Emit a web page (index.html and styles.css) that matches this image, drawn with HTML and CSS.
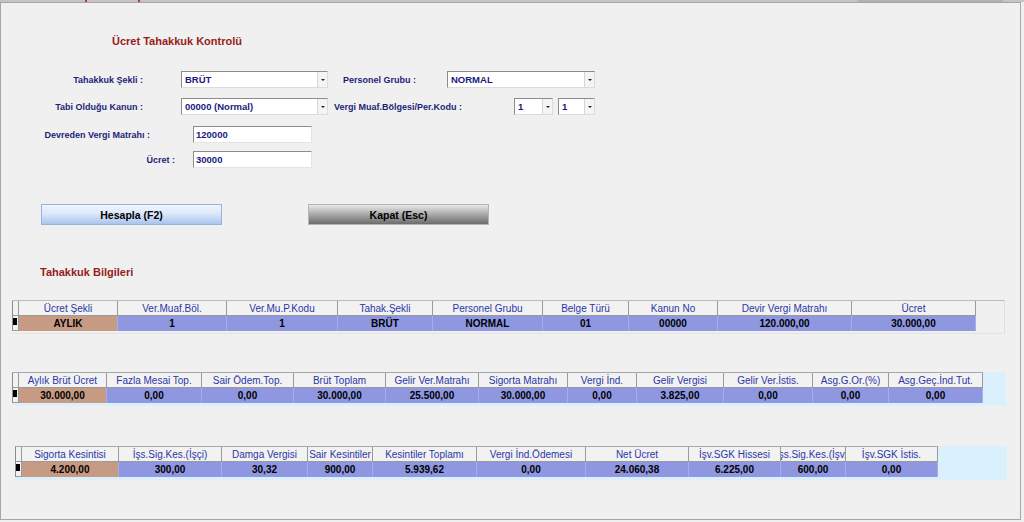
FILE: index.html
```html
<!DOCTYPE html>
<html lang="tr">
<head>
    <meta charset="UTF-8">
    <title>Ücret Tahakkuk Kontrolü</title>
    <link rel="stylesheet" href="styles.css">
</head>
<body>
    <div class="topbar">
        <span class="tick tick-1"></span>
        <span class="tick tick-2"></span>
        <span class="tab"></span>
    </div>
    <main class="panel">
        <h1 class="title">Ücret Tahakkuk Kontrolü</h1>

        <div class="form">
            <div class="row">
                <label class="lbl w142">Tahakkuk Şekli :</label>
                <div class="combo c147 ml38"><span>BRÜT</span><i class="drop"></i></div>
                <label class="lbl2 ml15 w104">Personel Grubu :</label>
                <div class="combo c148"><span>NORMAL</span><i class="drop"></i></div>
            </div>
            <div class="row r2">
                <label class="lbl w142">Tabi Olduğu Kanun :</label>
                <div class="combo c147 ml38"><span>00000 (Normal)</span><i class="drop"></i></div>
                <label class="lbl2 ml6 w180">Vergi Muaf.Bölgesi/Per.Kodu :</label>
                <div class="combo c39"><span>1</span><i class="drop"></i></div>
                <div class="combo c37 ml5"><span>1</span><i class="drop"></i></div>
            </div>
            <div class="row r3">
                <label class="lbl w149">Devreden Vergi Matrahı :</label>
                <input class="field ml43" type="text" value="120000">
            </div>
            <div class="row r4">
                <label class="lbl w174">Ücret :</label>
                <input class="field ml18" type="text" value="30000">
            </div>
        </div>

        <div class="buttons">
            <button class="btn btn-blue">Hesapla (F2)</button>
            <button class="btn btn-gray">Kapat (Esc)</button>
        </div>

        <h2 class="subtitle">Tahakkuk Bilgileri</h2>

        <!-- genel bilgiler -->
        <div class="grid grid-a">
            <div class="cols cols-a">
                <div class="hd"></div>
                <div class="hd">Ücret Şekli</div>
                <div class="hd">Ver.Muaf.Böl.</div>
                <div class="hd">Ver.Mu.P.Kodu</div>
                <div class="hd">Tahak.Şekli</div>
                <div class="hd">Personel Grubu</div>
                <div class="hd">Belge Türü</div>
                <div class="hd">Kanun No</div>
                <div class="hd">Devir Vergi Matrahı</div>
                <div class="hd">Ücret</div>
                <div class="cell ind"><span class="mark"></span></div>
                <div class="cell key">AYLIK</div>
                <div class="cell">1</div>
                <div class="cell">1</div>
                <div class="cell">BRÜT</div>
                <div class="cell">NORMAL</div>
                <div class="cell">01</div>
                <div class="cell">00000</div>
                <div class="cell">120.000,00</div>
                <div class="cell">30.000,00</div>
            </div>
        </div>

        <!-- brüt / vergi -->
        <div class="grid grid-b blue">
            <div class="cols cols-b">
                <div class="hd"></div>
                <div class="hd">Aylık Brüt Ücret</div>
                <div class="hd">Fazla Mesai Top.</div>
                <div class="hd">Sair Ödem.Top.</div>
                <div class="hd">Brüt Toplam</div>
                <div class="hd">Gelir Ver.Matrahı</div>
                <div class="hd">Sigorta Matrahı</div>
                <div class="hd">Vergi İnd.</div>
                <div class="hd">Gelir Vergisi</div>
                <div class="hd">Gelir Ver.İstis.</div>
                <div class="hd">Asg.G.Or.(%)</div>
                <div class="hd">Asg.Geç.İnd.Tut.</div>
                <div class="cell ind"><span class="mark"></span></div>
                <div class="cell key">30.000,00</div>
                <div class="cell">0,00</div>
                <div class="cell">0,00</div>
                <div class="cell">30.000,00</div>
                <div class="cell">25.500,00</div>
                <div class="cell">30.000,00</div>
                <div class="cell">0,00</div>
                <div class="cell">3.825,00</div>
                <div class="cell">0,00</div>
                <div class="cell">0,00</div>
                <div class="cell">0,00</div>
            </div>
        </div>

        <!-- kesintiler -->
        <div class="grid grid-c blue">
            <div class="cols cols-c">
                <div class="hd"></div>
                <div class="hd">Sigorta Kesintisi</div>
                <div class="hd">İşs.Sig.Kes.(İşçi)</div>
                <div class="hd">Damga Vergisi</div>
                <div class="hd">Sair Kesintiler</div>
                <div class="hd">Kesintiler Toplamı</div>
                <div class="hd">Vergi İnd.Ödemesi</div>
                <div class="hd">Net Ücret</div>
                <div class="hd">İşv.SGK Hissesi</div>
                <div class="hd">İşs.Sig.Kes.(İşv.)</div>
                <div class="hd">İşv.SGK İstis.</div>
                <div class="cell ind"><span class="mark"></span></div>
                <div class="cell key">4.200,00</div>
                <div class="cell">300,00</div>
                <div class="cell">30,32</div>
                <div class="cell">900,00</div>
                <div class="cell">5.939,62</div>
                <div class="cell">0,00</div>
                <div class="cell">24.060,38</div>
                <div class="cell">6.225,00</div>
                <div class="cell">600,00</div>
                <div class="cell">0,00</div>
            </div>
        </div>
    </main>
</body>
</html>
```

FILE: styles.css
```css
body {
    margin: 0;
    background-color: #f0f0f0;
    font-family: "Liberation Sans", Arial, sans-serif;
    color: #000;
}

/* thin strip above the form (rest of the parent window) */
.topbar {
    height: 2px;
    display: flex;
    background-color: #c4c4c4;
}
.tick {
    width: 2px;
    background-color: #b04040;
}
.tick-1 { margin-left: 85px; }
.tick-2 { margin-left: 51px; }
.tab {
    margin-left: 718px;
    width: 145px;
    background-color: #b2b2b2;
}

.panel {
    box-sizing: border-box;
    width: 1021px;
    height: 518px;
    border: 1px solid #a6a6a6;
    background-color: #f0f0f0;
}

.title,
.subtitle {
    margin: 0;
    font-size: 11px;
    line-height: 13px;
    font-weight: bold;
    color: #981c1c;
}
.title {
    padding: 32px 0 0 111px;
}
.subtitle {
    margin-top: 41px;
    padding-left: 39px;
}

/* form */
.form {
    margin-top: 23px;
}
.row {
    display: flex;
    align-items: center;
    height: 17px;
}
.r2 { margin-top: 10px; }
.r3 { margin-top: 11px; }
.r4 { margin-top: 8px; }

.lbl,
.lbl2 {
    flex: none;
    font-size: 9px;
    font-weight: bold;
    color: #1e1e78;
    white-space: nowrap;
}
.lbl { text-align: right; }
.w104 { width: 104px; }
.w142 { width: 142px; }
.w149 { width: 149px; }
.w174 { width: 174px; }
.w180 { width: 180px; }

.ml5 { margin-left: 5px; }
.ml6 { margin-left: 6px; }
.ml15 { margin-left: 15px; }
.ml18 { margin-left: 18px; }
.ml38 { margin-left: 38px; }
.ml43 { margin-left: 43px; }

.combo {
    box-sizing: border-box;
    flex: none;
    display: flex;
    height: 17px;
    background-color: #fff;
    border: 1px solid;
    border-color: #8c8c8c #dcdcdc #dcdcdc #8c8c8c;
}
.combo span {
    padding-left: 3px;
    font-size: 9.5px;
    line-height: 15px;
    font-weight: bold;
    color: #1a1a80;
}
.combo .drop {
    margin-left: auto;
    width: 9px;
    display: flex;
    align-items: center;
    justify-content: center;
    background-color: #f4f4f4;
    border-left: 1px solid #d6d6d6;
}
.combo .drop::after {
    content: "";
    border-left: 2px solid transparent;
    border-right: 2px solid transparent;
    border-top: 2px solid #222;
}
.c37 { width: 37px; }
.c39 { width: 39px; }
.c147 { width: 147px; }
.c148 { width: 148px; }

.field {
    box-sizing: border-box;
    flex: none;
    width: 119px;
    height: 17px;
    margin-top: 0;
    margin-bottom: 0;
    margin-right: 0;
    padding: 0 2px;
    border: 1px solid;
    border-color: #8c8c8c #e4e4e4 #e4e4e4 #8c8c8c;
    background-color: #fff;
    font-family: inherit;
    font-size: 9.5px;
    font-weight: bold;
    color: #1a1a80;
}

/* buttons */
.buttons {
    display: flex;
    gap: 86px;
    margin-top: 36px;
    padding-left: 40px;
}
.btn {
    box-sizing: border-box;
    width: 181px;
    height: 21px;
    padding: 0;
    font-family: inherit;
    font-size: 10.5px;
    font-weight: bold;
    color: #000;
    cursor: pointer;
}
.btn-blue {
    background: linear-gradient(#f0f5ff, #dce8fb 45%, #a9c4ee);
    border: 1px solid #98b2da;
}
.btn-gray {
    background: linear-gradient(#e8e8e8, #a8a8a8 50%, #6c6c6c);
    border: 1px solid #b4b4b4;
}

/* data grids */
.grid {
    box-sizing: border-box;
    height: 34px;
}
.grid-a {
    width: 993px;
    margin: 21px 0 0 11px;
    border-top: 1px solid #bcbcbc;
    border-right: 1px solid #dedede;
    border-bottom: 1px solid #e4e4e4;
}
.grid-b {
    width: 994px;
    margin: 38px 0 0 11px;
}
.grid-c {
    width: 992px;
    margin: 40px 0 0 14px;
}
.blue {
    background-color: #daf1fd;
}

.cols {
    display: grid;
    grid-auto-rows: 15px;
    width: max-content;
    border-left: 1px solid #8c8c8c;
}
.blue .cols {
    border-top: 1px solid #a8a8a8;
}
.cols-a { grid-template-columns: 6px 99px 109px 111px 95px 110px 86px 89px 134px 124px; }
.cols-b { grid-template-columns: 6px 88px 95px 92px 92px 93px 89px 69px 87px 89px 76px 94px; }
.cols-c { grid-template-columns: 6px 97px 103px 86px 65px 104px 109px 103px 92px 65px 92px; }

.hd,
.cell {
    box-sizing: border-box;
    display: flex;
    align-items: center;
    justify-content: center;
    overflow: hidden;
    white-space: nowrap;
}
.hd {
    background-color: #f2f2f2;
    border-right: 1px solid #9a9a9a;
    border-bottom: 1px solid #9a9a9a;
    font-size: 10px;
    color: #2a36a6;
}
.cell {
    background-color: #8f97e0;
    border-right: 1px solid #a7ade8;
    font-size: 10px;
    font-weight: bold;
}
.cell.key {
    background-color: #c79a84;
}
.cell.ind {
    justify-content: flex-start;
    align-items: flex-start;
    background-color: #f2f2f2;
    border-right: 1px solid #9a9a9a;
    border-bottom: 1px solid #9a9a9a;
}
.mark {
    width: 4px;
    height: 7px;
    margin: 2px 0 0 0;
    background-color: #000;
}
```
